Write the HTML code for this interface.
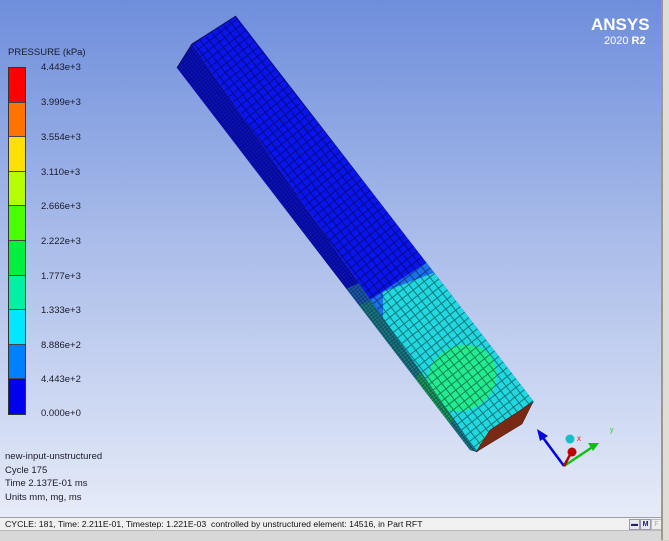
<!DOCTYPE html>
<html><head><meta charset="utf-8"><style>
html,body{margin:0;padding:0;width:669px;height:540px;overflow:hidden;background:#d4d0c8;font-family:"Liberation Sans",Arial,sans-serif}
#vp{position:absolute;left:0;top:0;width:661px;height:517px;background:linear-gradient(#6e8edc,#a8bbe9 45%,#e6ebf8 100%)}
.t{position:absolute;font-size:9.5px;color:#1a1a2a;white-space:nowrap}
#lb{position:absolute;left:8px;top:67px;width:16px;height:346px;border:1px solid #333}
#lb div{height:34.6px;box-sizing:border-box;border-bottom:1px solid #444}
#sb{position:absolute;left:0;top:517px;width:661px;height:13px;background:#f0f0f0;border-top:1px solid #a0a0a0;font-size:8.7px;line-height:12px;padding-left:5px;box-sizing:border-box;color:#111}
#sb2{position:absolute;left:0;top:530px;width:661px;height:10px;background:#d8d8d8;border-top:1px solid #bbb}
#rs{position:absolute;left:661px;top:0;width:8px;height:540px;background:#e0ddd6;border-left:2px solid #9c9890}
</style></head><body>
<div id="vp">
<div class="t" style="left:8px;top:47px">PRESSURE (kPa)</div>
<div id="lb">
<div style="background:#ff0000"></div><div style="background:#ff7400"></div><div style="background:#ffe000"></div><div style="background:#b4ff00"></div><div style="background:#4cff00"></div><div style="background:#00f040"></div><div style="background:#00f0a4"></div><div style="background:#00e8ff"></div><div style="background:#0080ff"></div><div style="background:#0000f0;border:none"></div>
</div>
<div class="t" style="left:41px;top:62px">4.443e+3</div>
<div class="t" style="left:41px;top:97px">3.999e+3</div>
<div class="t" style="left:41px;top:132px">3.554e+3</div>
<div class="t" style="left:41px;top:167px">3.110e+3</div>
<div class="t" style="left:41px;top:201px">2.666e+3</div>
<div class="t" style="left:41px;top:236px">2.222e+3</div>
<div class="t" style="left:41px;top:271px">1.777e+3</div>
<div class="t" style="left:41px;top:305px">1.333e+3</div>
<div class="t" style="left:41px;top:340px">8.886e+2</div>
<div class="t" style="left:41px;top:374px">4.443e+2</div>
<div class="t" style="left:41px;top:408px">0.000e+0</div>
<div class="t" style="left:5px;top:451px">new-input-unstructured</div>
<div class="t" style="left:5px;top:465px">Cycle 175</div>
<div class="t" style="left:5px;top:478px">Time 2.137E-01 ms</div>
<div class="t" style="left:5px;top:492px">Units mm, mg, ms</div>
<div style="position:absolute;left:591px;top:15px;color:#fff;font-weight:bold;font-size:17px">ANSYS</div>
<div style="position:absolute;left:604px;top:35px;color:#fff;font-size:11px">2020 <b>R2</b></div>
<svg width="661" height="517" style="position:absolute;left:0;top:0">
<defs>
<pattern id="g" width="7" height="7" patternUnits="userSpaceOnUse" patternTransform="rotate(52)"><rect width="7" height="7" fill="none" stroke="#000" stroke-opacity=".45" stroke-width="1"/></pattern>
<pattern id="g2" width="3" height="3" patternUnits="userSpaceOnUse" patternTransform="rotate(52)"><rect width="3" height="3" fill="none" stroke="#000" stroke-opacity=".5" stroke-width=".6"/></pattern>
<clipPath id="cf"><polygon points="192,44 236,16 534,402 477,452"/></clipPath>
<clipPath id="cl"><polygon points="177,68 192,44 477,452 470,450"/></clipPath>
</defs>
<g clip-path="url(#cl)">
<rect width="661" height="517" fill="#0a10c8"/>
<polygon points="322,300 430,250 700,250 700,520 322,520" fill="#1a5ab0"/>
<polygon points="340,315 436,268 700,268 700,520 340,520" fill="#1a7a88"/>
<ellipse cx="435" cy="398" rx="22" ry="36" fill="#1a9a60"/>
<rect width="661" height="517" fill="url(#g2)"/>
</g>
<g clip-path="url(#cf)">
<rect width="661" height="517" fill="#0a14ee"/>
<polygon points="370,300 430,260 700,260 700,520 370,520" fill="#1a70f0"/>
<polygon points="383,292 436,272 700,272 700,520 383,520" fill="#20d8e0"/>
<ellipse cx="462" cy="378" rx="36" ry="32" transform="rotate(-35 462 378)" fill="#22ec90"/>
<polygon points="478,440 530,408 540,420 480,460" fill="#20e0c0"/>
<rect width="661" height="517" fill="url(#g)"/>
</g>
<polygon points="476,452 490,430 533,402 522,424" fill="#7a2a14" stroke="#3a1008" stroke-width=".5"/>
<line x1="177" y1="68" x2="192" y2="44" stroke="#0a0a60" stroke-width="1"/>
<line x1="192" y1="44" x2="236" y2="16" stroke="#0a0a60"/>
<line x1="564" y1="466" x2="541" y2="435" stroke="#0000e0" stroke-width="2.5"/>
<polygon points="537,429 548,436 540,441" fill="#0000e0"/>
<line x1="564" y1="466" x2="594" y2="446" stroke="#10c010" stroke-width="2.5"/>
<polygon points="599,443 588,443 593,451" fill="#10c010"/>
<line x1="564" y1="466" x2="571" y2="453" stroke="#b00000" stroke-width="2.5"/>
<circle cx="572" cy="452" r="4.5" fill="#c00000"/>
<circle cx="570" cy="439" r="4.5" fill="#10c0c8"/>
<text x="577" y="441" font-size="8" fill="#e02020" font-family="Liberation Sans">x</text>
<text x="610" y="432" font-size="7" fill="#20d020" font-family="Liberation Sans">y</text>
</svg>
</div>
<div id="sb">CYCLE: 181, Time: 2.211E-01, Timestep: 1.221E-03&nbsp; controlled by unstructured element: 14516, in Part RFT</div>
<div style="position:absolute;left:629px;top:519px;width:9px;height:9px;background:#e8e8f0;border:1px solid #99a;font-size:7px;line-height:9px;text-align:center;font-weight:bold;color:#226">▬</div>
<div style="position:absolute;left:640px;top:519px;width:9px;height:9px;background:#e8e8f0;border:1px solid #99a;font-size:7px;line-height:9px;text-align:center;font-weight:bold;color:#226">M</div>
<div style="position:absolute;left:651px;top:519px;width:9px;height:9px;background:#eee;border:1px solid #bbb;font-size:7px;line-height:9px;text-align:center;color:#aaa">F</div>
<div id="sb2"></div>
<div id="rs"></div>
</body></html>
